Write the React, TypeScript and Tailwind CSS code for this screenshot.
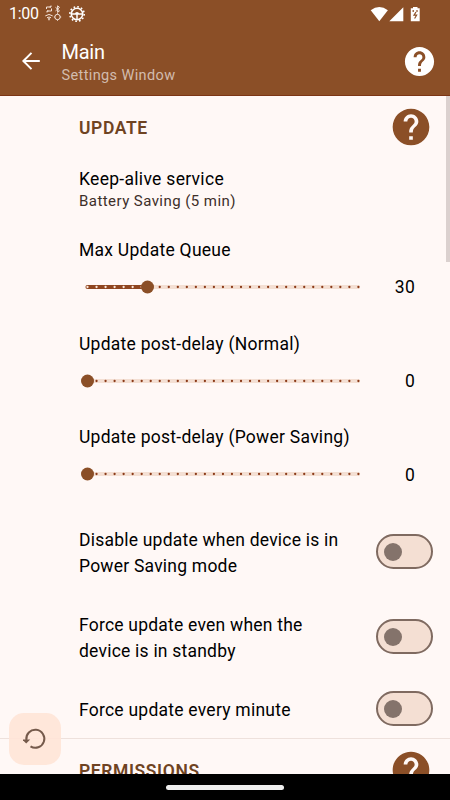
import { MdHelp } from "react-icons/md";

const TICKS = Array.from({ length: 31 }, (_, i) => i);

function SectionHeader({ title }: { title: string }) {
  return (
    <div className="flex h-[62px] shrink-0 items-center justify-between pl-[79px] pr-[17.5px]">
      <h2 className="pt-[2px] text-[17.5px] font-semibold tracking-[0.6px] text-[#6f4322]">{title}</h2>
      <MdHelp className="size-[44px] text-[#8b4f27]" />
    </div>
  );
}

function SliderRow({ label, value, position }: { label: string; value: number; position: number }) {
  const active = position > 0;
  return (
    <div className="h-[93.75px] shrink-0 pl-[79px] pr-[35px] pt-[12.75px]">
      <div className="text-[17.5px] font-[450] leading-6 tracking-[0.26px]">{label}</div>
      <div className="mt-[13px] flex h-6 items-center justify-between">
        <svg className="ml-[2px] h-[14px] w-[282px]" viewBox="81 0 282 14">
          <rect x="85.5" y="5" width="274.5" height="4" rx="1.5" fill="#f4dfd3" />
          {active && <rect x="85.5" y="5" width={position} height="4" rx="2" fill="#8f451f" />}
          {TICKS.map((i) => (
            <circle
              key={i}
              cx={87.5 + i * 9.03}
              cy="7"
              r="1.15"
              fill={active && i * 9.03 < position ? "#fbe6da" : "#8b3a18"}
            />
          ))}
          <circle cx={87.5 + position} cy="7" r="6.5" fill="#8b4f27" />
        </svg>
        <span className="pt-[1px] text-[17.5px] font-[450] leading-6 tracking-[0.26px]">{value}</span>
      </div>
    </div>
  );
}

function Toggle() {
  return (
    <button className="flex h-[35px] w-[57px] shrink-0 items-center rounded-full border-2 border-[#7f6a60] bg-[#f4dfd3] pl-[6px]">
      <span className="size-[18px] rounded-full bg-[#84736b]" />
    </button>
  );
}

export default function App() {
  return (
    <div className="flex h-[800px] w-[450px] flex-col overflow-hidden bg-[#fff8f6] font-['Roboto',sans-serif] text-black">
      <header className="h-24 shrink-0 border-b border-[#7c3515] bg-[#8b4f27] text-white">
        <div className="flex h-[27px] items-center pl-[9px]">
          <span className="w-[36px] text-[16px] leading-5 tracking-[-0.3px]">1:00</span>
          <svg className="size-[17px]" viewBox="0 0 17 17" fill="none" stroke="#f5e5dc" strokeWidth="1">
            <path d="M1.500 4V2H6V.5M6 2H4.500M6.500 3.500V6H2V7.500M2 6H3.500" />
            <path d="M10.500 2.300 14.500 5.800 12.600 7.400V.8L14.500 2.400 10.500 5.900" />
            <path d="M.3 10.900Q4 8 7.700 10.900M2 12.800Q4 11.200 6 12.800" />
            <path d="M4 13v2.200" strokeWidth="1.400" />
            <circle cx="12.500" cy="12" r="2.700" />
            <path d="M12.500 8.300v1M12.500 14.700v1M8.800 12h1M15.200 12h1" />
          </svg>
          <svg className="ml-[6px] size-[18px]" viewBox="0 0 18 18" fill="none" stroke="white">
            <circle cx="9" cy="9" r="5.700" strokeWidth="1.600" />
            <circle cx="9" cy="9" r="7.200" strokeWidth="1.600" strokeDasharray="1.700 2.070" />
            <path d="M3.500 9H14.500M9 9V14.500" strokeWidth="1.500" />
            <path d="M7 9a2 2 0 0 1 4 0Z" fill="white" stroke="none" />
          </svg>
          <svg className="ml-auto mr-[30px] h-[16px] w-[50px]" viewBox="370 5 50 16" fill="white">
            <path d="M370.700 9.300Q379.300 2.700 387.900 9.300L379.300 20.200Z" />
            <path d="M403.300 6.300V20.300H389.300Z" />
            <path d="M413 6h4.500v1.300h2.200V20.300h-8.900V7.300H413Z" />
            <path d="M413.200 9v2M417 9v2M416 11l-2 3.200h2.600L414.600 17.500" fill="none" stroke="#8b4f27" strokeWidth="1.200" />
          </svg>
        </div>
        <div className="flex h-[68px] items-center pl-[21px] pr-[13px]">
          <svg className="size-5" viewBox="0 0 20 20" fill="none" stroke="white" strokeWidth="2">
            <path d="M18.800 10H2.500M10.500 1.900 2.400 10 10.500 18.100" />
          </svg>
          <div className="ml-[20.500px] flex-1 pt-[5px]">
            <div className="text-[20px] leading-6 tracking-[-0.25px]">Main</div>
            <div className="text-[14.500px] leading-[23px] tracking-[0.38px] text-[#d2bcae]">Settings Window</div>
          </div>
          <MdHelp className="size-[35px]" />
        </div>
      </header>

      <main className="relative flex min-h-0 flex-1 flex-col overflow-hidden">
        <SectionHeader title="UPDATE" />
        <div className="h-[67px] shrink-0 pl-[79px] pt-[9px]">
          <div className="text-[17.500px] font-[450] leading-6 tracking-[0.3px]">Keep-alive service</div>
          <div className="text-[15px] leading-[21px] tracking-[0.44px] text-[#3d2f29]">Battery Saving (5 min)</div>
        </div>
        <SliderRow label="Max Update Queue" value={30} position={60} />
        <SliderRow label="Update post-delay (Normal)" value={0} position={0} />
        <SliderRow label="Update post-delay (Power Saving)" value={0} position={0} />
        <div className="mt-[2.750px] flex h-[85.500px] shrink-0 items-center justify-between pl-[79px] pr-[17.500px] text-[17.500px] font-[450] leading-[26px] tracking-[0.22px]">
          <div className="pt-[2px]">Disable update when device is in<br />Power Saving mode</div>
          <Toggle />
        </div>
        <div className="flex h-[84.500px] shrink-0 items-center justify-between pl-[79px] pr-[17.500px] text-[17.500px] font-[450] leading-[26px] tracking-[0.22px]">
          <div className="pt-[2px]">Force update even when the<br />device is in standby</div>
          <Toggle />
        </div>
        <div className="flex h-[60px] shrink-0 items-center justify-between border-b border-[#eee1dc] pl-[79px] pr-[17.500px] text-[17.500px] font-[450] leading-[26px] tracking-[0.24px]">
          <div className="pt-[2px]">Force update every minute</div>
          <Toggle />
        </div>
        <SectionHeader title="PERMISSIONS" />

        <div className="absolute right-0 top-0 h-[166px] w-[4px] bg-[#dbd1cf]" />
        <button className="absolute left-[9px] top-[616.500px] flex size-[52px] items-center justify-center rounded-[15px] bg-[#ffe4d7]/90">
          <svg className="size-6" viewBox="0.8 0.5 24 24" fill="none" stroke="#755a4b" strokeWidth="2">
            <path d="M4.200 13.500A9 9 0 1 1 8.300 19.900" />
            <path d="M0 13h8l-4 4Z" fill="#755a4b" stroke="none" />
          </svg>
        </button>
      </main>

      <nav className="flex h-[26px] shrink-0 items-center justify-center bg-black">
        <div className="h-[5px] w-[118px] rounded-full bg-[#eeeeee]" />
      </nav>
    </div>
  );
}
